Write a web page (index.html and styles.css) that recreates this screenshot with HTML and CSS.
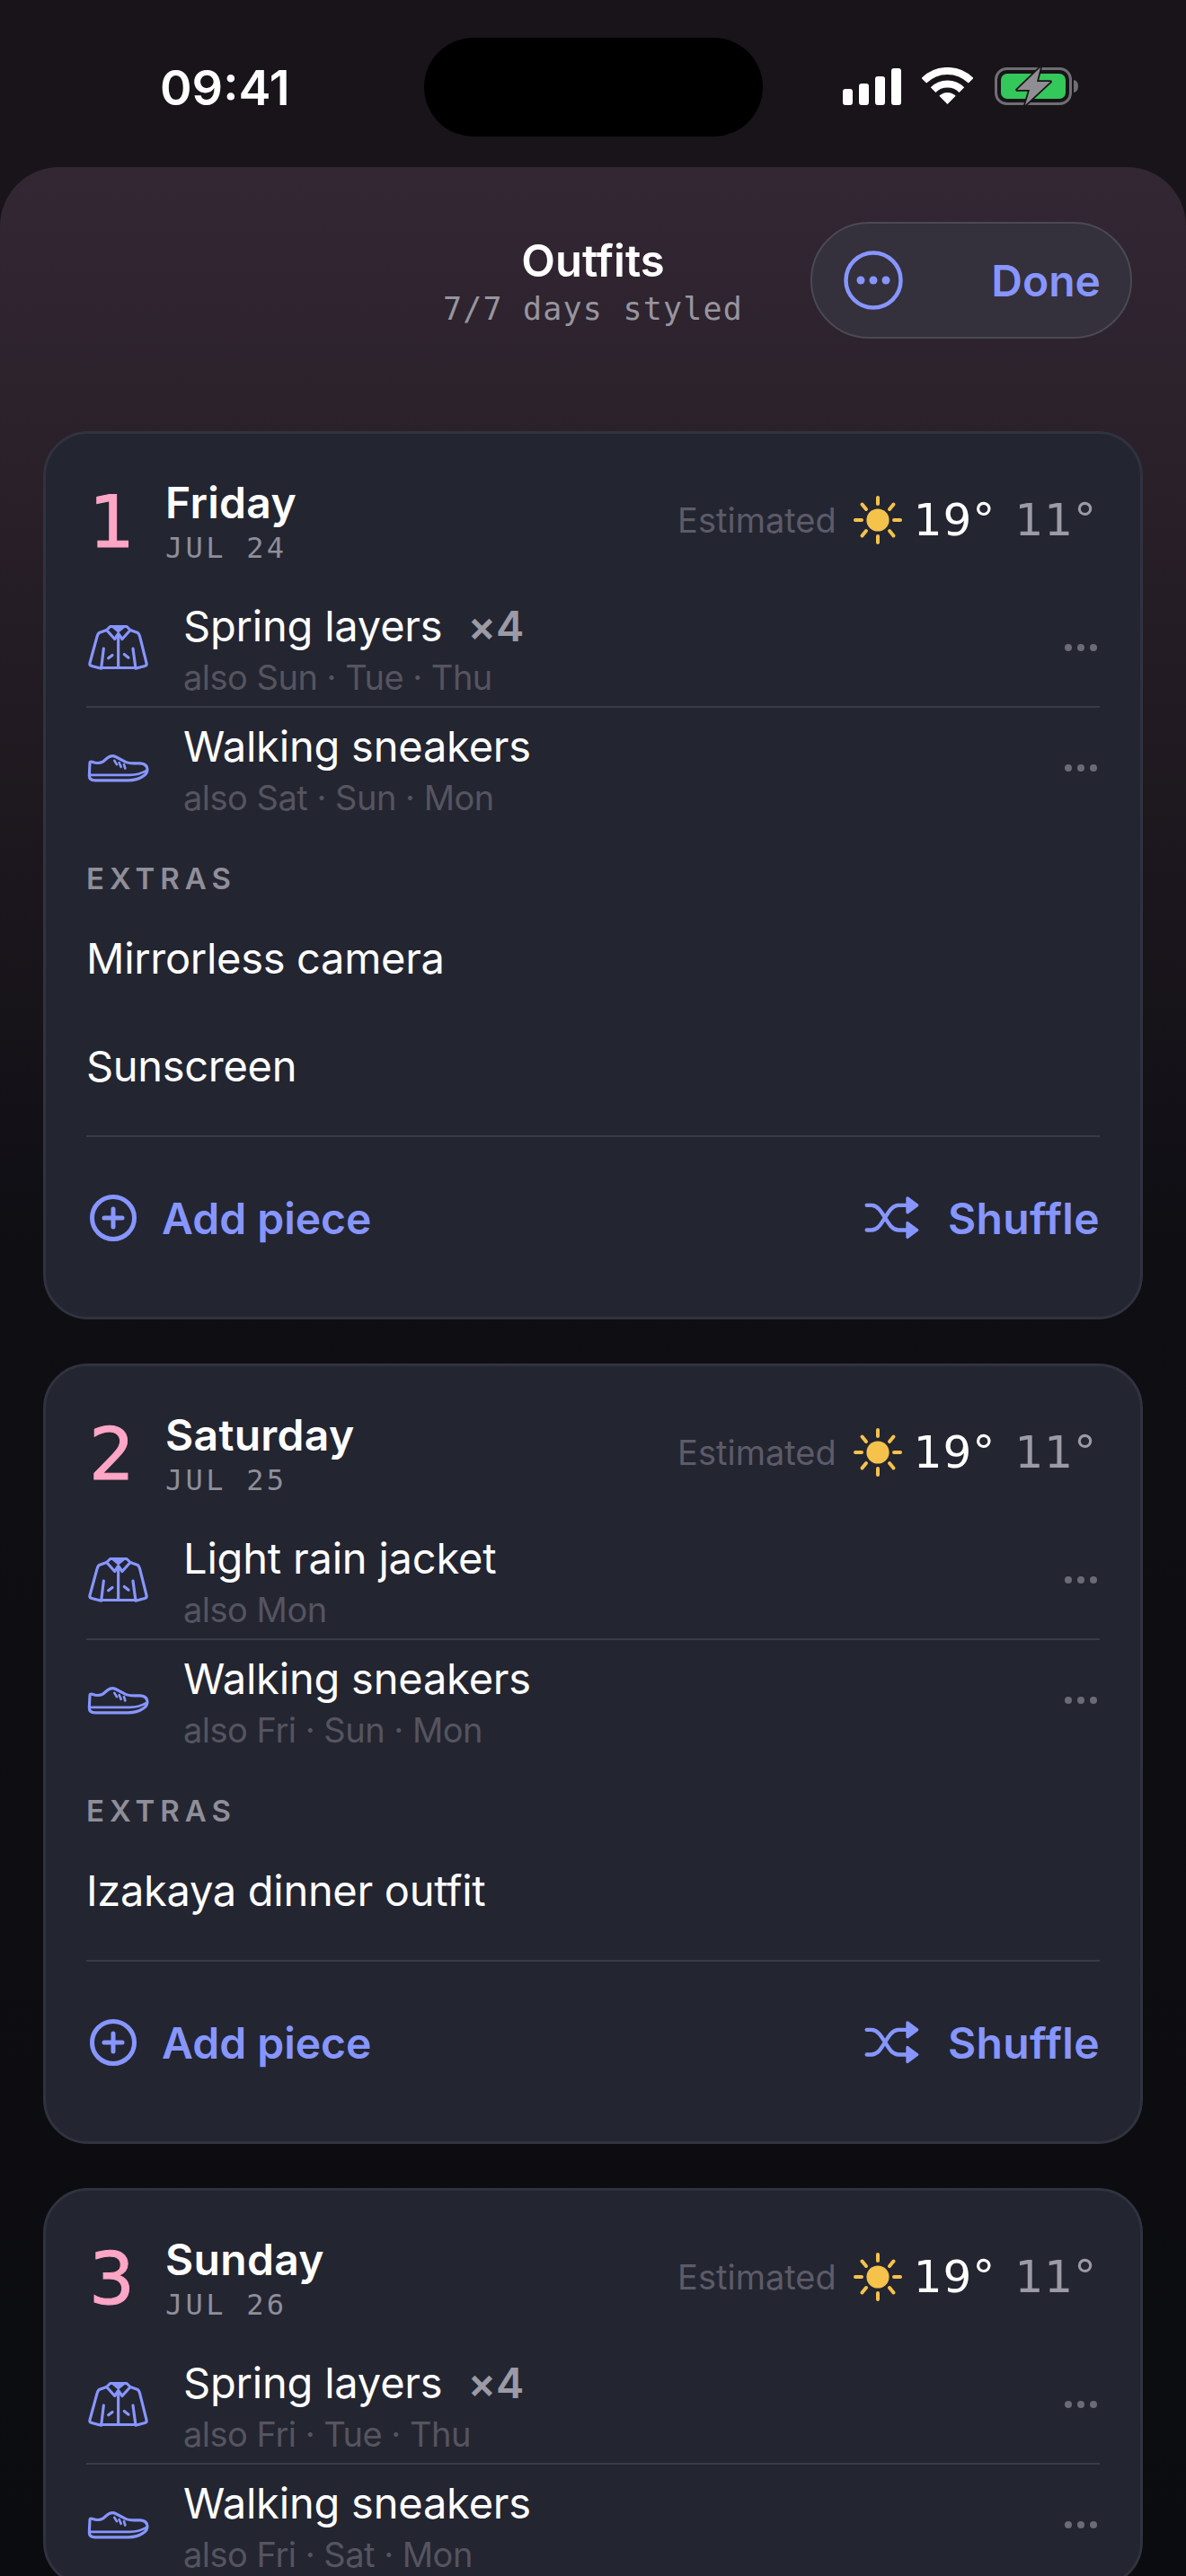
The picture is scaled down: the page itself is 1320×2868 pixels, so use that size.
FILE: index.html
```html
<!DOCTYPE html>
<html lang="en">
<head>
    <meta charset="UTF-8">
    <meta name="viewport" content="width=device-width, initial-scale=1.0">
    <title>Outfits</title>
    <link rel="stylesheet" href="styles.css">
</head>
<body>
    <svg class="sprite" xmlns="http://www.w3.org/2000/svg">
        <symbol id="jacket" viewBox="110 100 216 170">
            <path class="line" d="M190 116H245L257 128L230 158L217 140L205 158L178 128Z"/>
            <path class="solid" d="M192 117H243L217 138Z"/>
            <path class="line" d="M178 128L155 136Q149 139 146 150L122 238Q120 246 128 248L160 256L168 190M160 254H275M257 128L280 136Q286 139 289 150L311 238Q313 246 306 248L275 256L266 190M217 142V254M184 222L197 212M237 209L251 220"/>
        </symbol>
        <symbol id="sneaker" viewBox="110 500 216 170">
            <path class="line" d="M122 570Q122 564 130 566Q150 574 165 566L182 552Q195 542 208 549L240 566Q250 571 270 571H290Q314 573 314 592Q314 606 300 614Q280 628 250 628H140Q120 628 120 612Z"/>
            <path class="line thin" d="M122 610H255Q285 610 310 596M204 562L212 575M220 569L226 583M236 575L240 588"/>
        </symbol>
        <symbol id="sun" viewBox="0 0 54 54">
            <circle class="sun-disc" cx="27" cy="27" r="12.6"/>
            <path class="sun-ray" d="M27 2V9M27 45V52M2 27H9M45 27H52M9.5 9.5L14 15M44.500 9.500L40 15M9.500 44.500L14 39M44.500 44.500L40 39"/>
        </symbol>
        <symbol id="plus-circle" viewBox="0 0 60 60">
            <circle class="line wide" cx="30" cy="30" r="23.500"/>
            <path class="line wide" d="M30 20V40M20 30H40"/>
        </symbol>
        <symbol id="shuffle" viewBox="120 90 195 155">
            <path class="line heavy" d="M134 125H150C190 125 200 208 240 208H272M134 208H150C190 208 200 125 240 125H272"/>
            <path class="solid-round" d="M270 101L302 125L270 149ZM270 184L302 208L270 232Z"/>
        </symbol>
    </svg>

    <div class="status-bar">
        <div class="time">09:41</div>
        <div class="island"></div>
        <div class="status-icons">
            <div class="signal">
                <span class="bar-1"></span>
                <span class="bar-2"></span>
                <span class="bar-3"></span>
                <span class="bar-4"></span>
            </div>
            <svg class="wifi" viewBox="0 0 57 42">
                <path d="M2.300 14.800A37 37 0 0 1 54.700 14.800M12.600 25.100A22.500 22.500 0 0 1 44.400 25.100" fill="none" stroke="#fff" stroke-width="8"/>
                <path d="M28.500 41L19.300 31.800A13 13 0 0 1 37.700 31.800Z" fill="#fff"/>
            </svg>
            <svg class="battery" viewBox="0 0 94 44">
                <rect x="1.500" y="2.500" width="83" height="39" rx="12" fill="none" stroke="#6e6e73" stroke-width="3"/>
                <rect x="7" y="8" width="72" height="28" rx="7" fill="#34c759"/>
                <path d="M88 15Q93 16 93 22Q93 28 88 29Z" fill="#6e6e73"/>
                <path d="M51 1L25 26H39L34 43L62 17H47Z" fill="#8e8e93" stroke="#18141a" stroke-width="3.500" paint-order="stroke" stroke-linejoin="round"/>
            </svg>
        </div>
    </div>

    <div class="sheet">
        <div class="sheet-head">
            <div class="sheet-title">
                <h1>Outfits</h1>
                <p>7/7 days styled</p>
            </div>
            <div class="pill">
                <svg class="more" viewBox="0 0 66 66">
                    <circle cx="33" cy="33" r="30.500" fill="none" stroke="#8796ff" stroke-width="4.500"/>
                    <circle cx="19" cy="33" r="4.500" fill="#8796ff"/>
                    <circle cx="33" cy="33" r="4.500" fill="#8796ff"/>
                    <circle cx="47" cy="33" r="4.500" fill="#8796ff"/>
                </svg>
                <span class="done">Done</span>
            </div>
        </div>

        <div class="card">
            <div class="card-head">
                <div class="day-num">1</div>
                <div class="day-name">
                    <h2>Friday</h2>
                    <div class="date">JUL 24</div>
                </div>
                <div class="weather">
                    <span class="est">Estimated</span>
                    <svg class="sun"><use href="#sun"/></svg>
                    <span class="hi">19°</span>
                    <span class="lo">11°</span>
                </div>
            </div>
            <div class="row">
                <svg class="piece"><use href="#jacket"/></svg>
                <div class="row-text">
                    <div class="name">Spring layers<span class="count">×4</span></div>
                    <div class="also">also Sun · Tue · Thu</div>
                </div>
                <div class="dots"><i></i><i></i><i></i></div>
            </div>
            <div class="row">
                <svg class="piece"><use href="#sneaker"/></svg>
                <div class="row-text">
                    <div class="name">Walking sneakers</div>
                    <div class="also">also Sat · Sun · Mon</div>
                </div>
                <div class="dots"><i></i><i></i><i></i></div>
            </div>
            <div class="extras-label">EXTRAS</div>
            <div class="extra">Mirrorless camera</div>
            <div class="extra">Sunscreen</div>
            <div class="card-foot">
                <div class="action"><svg class="plus"><use href="#plus-circle"/></svg>Add piece</div>
                <div class="action action-shuffle"><svg class="shuffle"><use href="#shuffle"/></svg>Shuffle</div>
            </div>
        </div>

        <div class="card">
            <div class="card-head">
                <div class="day-num">2</div>
                <div class="day-name">
                    <h2>Saturday</h2>
                    <div class="date">JUL 25</div>
                </div>
                <div class="weather">
                    <span class="est">Estimated</span>
                    <svg class="sun"><use href="#sun"/></svg>
                    <span class="hi">19°</span>
                    <span class="lo">11°</span>
                </div>
            </div>
            <div class="row">
                <svg class="piece"><use href="#jacket"/></svg>
                <div class="row-text">
                    <div class="name">Light rain jacket</div>
                    <div class="also">also Mon</div>
                </div>
                <div class="dots"><i></i><i></i><i></i></div>
            </div>
            <div class="row">
                <svg class="piece"><use href="#sneaker"/></svg>
                <div class="row-text">
                    <div class="name">Walking sneakers</div>
                    <div class="also">also Fri · Sun · Mon</div>
                </div>
                <div class="dots"><i></i><i></i><i></i></div>
            </div>
            <div class="extras-label">EXTRAS</div>
            <div class="extra">Izakaya dinner outfit</div>
            <div class="card-foot">
                <div class="action"><svg class="plus"><use href="#plus-circle"/></svg>Add piece</div>
                <div class="action action-shuffle"><svg class="shuffle"><use href="#shuffle"/></svg>Shuffle</div>
            </div>
        </div>

        <div class="card">
            <div class="card-head">
                <div class="day-num">3</div>
                <div class="day-name">
                    <h2>Sunday</h2>
                    <div class="date">JUL 26</div>
                </div>
                <div class="weather">
                    <span class="est">Estimated</span>
                    <svg class="sun"><use href="#sun"/></svg>
                    <span class="hi">19°</span>
                    <span class="lo">11°</span>
                </div>
            </div>
            <div class="row">
                <svg class="piece"><use href="#jacket"/></svg>
                <div class="row-text">
                    <div class="name">Spring layers<span class="count">×4</span></div>
                    <div class="also">also Fri · Tue · Thu</div>
                </div>
                <div class="dots"><i></i><i></i><i></i></div>
            </div>
            <div class="row">
                <svg class="piece"><use href="#sneaker"/></svg>
                <div class="row-text">
                    <div class="name">Walking sneakers</div>
                    <div class="also">also Fri · Sat · Mon</div>
                </div>
                <div class="dots"><i></i><i></i><i></i></div>
            </div>
        </div>
    </div>
</body>
</html>
```
FILE: styles.css
```css
* {
    box-sizing: border-box;
    margin: 0;
    padding: 0;
}

body {
    font-family: Inter, "Noto Sans", sans-serif;
    background: #18141a;
    color: #fff;
    width: 1320px;
    height: 2868px;
    overflow: hidden;
}

.sprite {
    display: none;
}

/* shared icon strokes */
.line {
    fill: none;
    stroke: #8796ff;
    stroke-width: 9.500;
    stroke-linecap: round;
    stroke-linejoin: round;
}

.thin {
    stroke-width: 8;
}

.wide {
    stroke-width: 5;
}

.heavy {
    stroke-width: 13;
}

.solid {
    fill: #8796ff;
}

.solid-round {
    fill: #8796ff;
    stroke: #8796ff;
    stroke-width: 10;
    stroke-linejoin: round;
}

.sun-disc {
    fill: #f5c24b;
}

.sun-ray {
    fill: none;
    stroke: #f5c24b;
    stroke-width: 4;
    stroke-linecap: round;
}

/* status bar */
.status-bar {
    height: 186px;
    display: grid;
    grid-template-columns: 472px 377px 1fr;
    padding-top: 42px;
}

.time {
    padding: 26px 0 0 178px;
    font-size: 54px;
    font-weight: 600;
    line-height: 60px;
}

.island {
    height: 110px;
    background: #000;
    border-radius: 55px;
}

.status-icons {
    display: flex;
    align-items: flex-start;
    padding: 33px 0 0 89px;
}

.signal {
    display: flex;
    align-items: flex-end;
    gap: 7px;
    height: 41px;
    margin-top: 1px;
}

.signal span {
    width: 11px;
    background: #fff;
    border-radius: 3px;
}

.bar-1 {
    height: 18px;
}

.bar-2 {
    height: 24px;
}

.bar-3 {
    height: 32px;
}

.bar-4 {
    height: 41px;
}

.wifi {
    width: 57px;
    height: 42px;
    margin-left: 23px;
}

.battery {
    width: 94px;
    height: 44px;
    margin-left: 24px;
    margin-top: -1px;
}

/* sheet */
.sheet {
    height: 2682px;
    padding: 0 48px;
    border-radius: 66px 66px 0 0;
    background: linear-gradient(180deg, #322733 0, #2c222c 250px, #1e181f 700px, #0e0e13 1200px, #0b0c10 100%);
}

.sheet-head {
    height: 294px;
    display: grid;
    grid-template-columns: 1fr auto 1fr;
    padding-top: 61px;
}

.sheet-title {
    grid-column: 2;
    text-align: center;
    padding-top: 15px;
}

.sheet-title h1 {
    font-size: 49px;
    font-weight: 600;
    line-height: 58px;
}

.sheet-title p {
    margin-top: 4px;
    font-family: "DejaVu Sans Mono", monospace;
    font-size: 35px;
    line-height: 40px;
    letter-spacing: 1.200px;
    color: #97959f;
}

.pill {
    grid-column: 3;
    justify-self: end;
    width: 358px;
    height: 130px;
    margin-right: 12px;
    padding: 0 33px 0 35px;
    display: flex;
    align-items: center;
    justify-content: space-between;
    background: #34303c;
    border: 2px solid #4b4955;
    border-radius: 65px;
}

.more {
    width: 66px;
    height: 66px;
}

.done {
    font-size: 48px;
    font-weight: 600;
    color: #8796ff;
}

/* day cards */
.card {
    margin-bottom: 49px;
    padding: 0 45px;
    background: #232531;
    border: 3px solid #30333f;
    border-radius: 50px;
}

.card-head {
    height: 172px;
    display: flex;
    align-items: flex-start;
    padding-top: 48px;
}

.day-num {
    width: 88px;
    padding: 3px 0 0 3px;
    font-family: "DejaVu Sans", sans-serif;
    font-size: 80px;
    line-height: 96px;
    color: #ffa6c6;
    -webkit-text-stroke: 1px #ffa6c6;
}

.day-name h2 {
    font-size: 48px;
    font-weight: 600;
    line-height: 58px;
    letter-spacing: 0.3px;
}

.date {
    margin-top: 3px;
    font-family: "DejaVu Sans Mono", monospace;
    font-size: 32px;
    line-height: 36px;
    letter-spacing: 3.300px;
    color: #8f8e99;
}

.weather {
    margin: 14px 3px 0 auto;
    height: 68px;
    display: flex;
    align-items: center;
}

.est {
    font-size: 38px;
    color: #5c5b68;
}

.sun {
    width: 54px;
    height: 54px;
    margin: 0 13px 0 19px;
}

.hi, .lo {
    font-family: "DejaVu Sans", sans-serif;
    font-size: 50px;
    letter-spacing: 1px;
}

.lo {
    margin-left: 21px;
    color: #9b9aa5;
}

.row {
    height: 133px;
    display: flex;
    align-items: center;
    border-bottom: 2px solid #3a3b47;
}

.row:nth-of-type(3) {
    border-bottom: 0;
}

.piece {
    width: 72px;
    height: 57px;
    margin-right: 36px;
}

.row-text {
    flex: 1;
    padding-top: 3px;
}

.name {
    font-size: 47px;
    line-height: 58px;
    letter-spacing: -0.2px;
}

.count {
    margin-left: 28px;
    font-weight: 600;
    color: #9b9aa5;
}

.also {
    margin-top: 5px;
    font-size: 38px;
    line-height: 46px;
    letter-spacing: -0.5px;
    color: #55545f;
}

.dots {
    display: flex;
    gap: 6px;
    margin-right: 3px;
}

.dots i {
    width: 8px;
    height: 8px;
    border-radius: 50%;
    background: #6b6a76;
}

.extras-label {
    padding-top: 40px;
    margin-bottom: 13px;
    font-size: 33px;
    font-weight: 600;
    line-height: 34px;
    letter-spacing: 6px;
    color: #8f8e99;
}

.extra {
    height: 120px;
    padding-bottom: 3px;
    display: flex;
    align-items: center;
    font-size: 47px;
    letter-spacing: -0.3px;
}

.card-foot {
    margin-top: 16px;
    padding: 60px 0 80px;
    display: flex;
    justify-content: space-between;
    border-top: 2px solid #3a3b47;
}

.action {
    display: flex;
    align-items: center;
    gap: 24px;
    height: 60px;
    font-size: 48px;
    font-weight: 600;
    color: #8796ff;
}

.action-shuffle {
    gap: 30px;
    letter-spacing: 0.4px;
}

.plus {
    width: 60px;
    height: 60px;
}

.shuffle {
    width: 65px;
    height: 52px;
}
```
